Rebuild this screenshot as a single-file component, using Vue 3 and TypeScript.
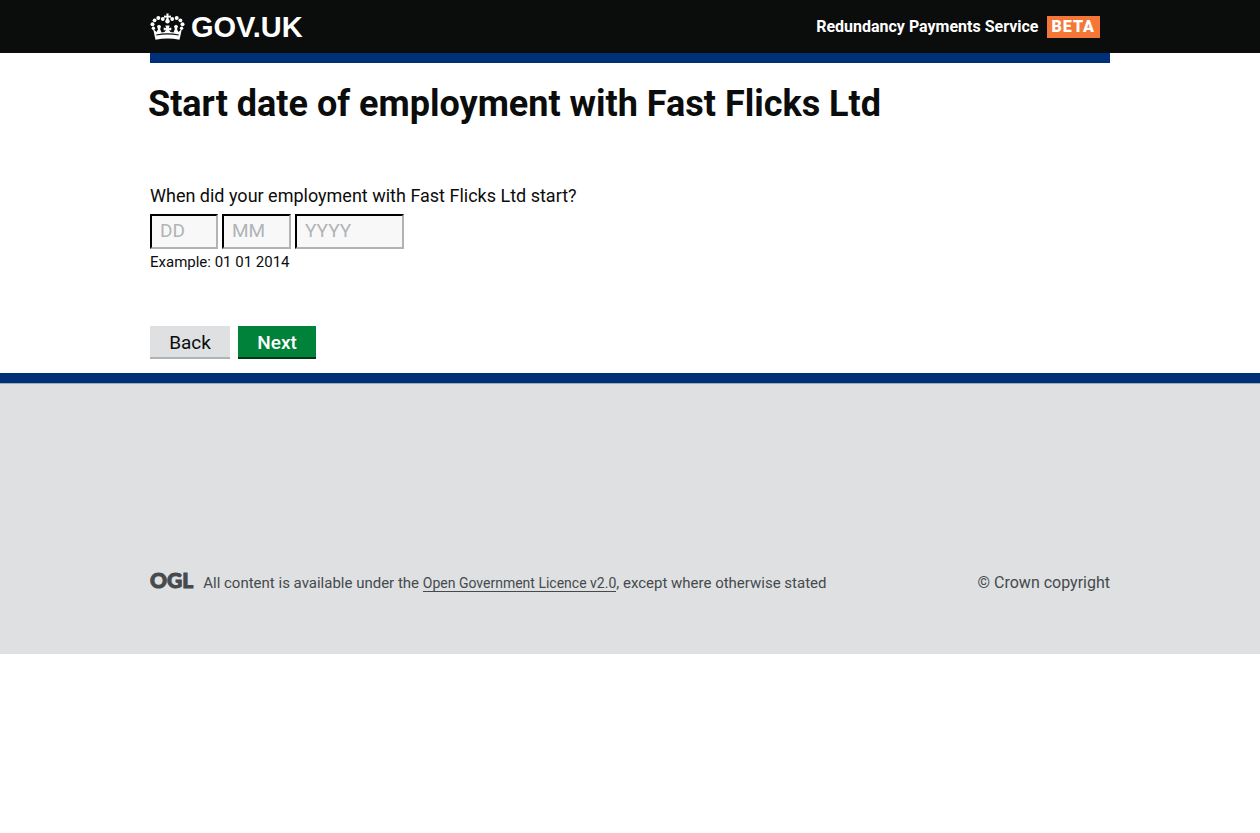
<script setup lang="ts">
import { ref } from 'vue'

interface DatePart {
  id: string
  label: string
  placeholder: string
  maxlength: number
}

const company = 'Fast Flicks Ltd'
const parts: DatePart[] = [
  { id: 'day', label: 'Day', placeholder: 'DD', maxlength: 2 },
  { id: 'month', label: 'Month', placeholder: 'MM', maxlength: 2 },
  { id: 'year', label: 'Year', placeholder: 'YYYY', maxlength: 4 },
]
const values = ref<Record<string, string>>({ day: '', month: '', year: '' })
</script>

<template>
  <div class="page">
    <header class="header">
      <div class="wrap header-row">
        <a class="brand" href="#">
          <svg class="crown" viewBox="0 0 35 28" fill="#fff" aria-hidden="true">
            <path d="M16.3 0.500h2.400l-.3 2.300 2.600-.4v2.400l-2.600-.4.5 3.200h-2.800l.5-3.200-2.600.4V2.400l2.600.4z" />
            <circle cx="17.5" cy="8.200" r="2.200" />
            <circle cx="12.800" cy="6" r="1.900" />
            <circle cx="8.300" cy="5" r="2" />
            <circle cx="4.600" cy="7.300" r="1.900" />
            <circle cx="2.500" cy="11.200" r="2" />
            <circle cx="3.400" cy="15.200" r="1.700" />
            <circle cx="22.200" cy="6" r="1.900" />
            <circle cx="26.700" cy="5" r="2" />
            <circle cx="30.400" cy="7.300" r="1.900" />
            <circle cx="32.500" cy="11.200" r="2" />
            <circle cx="31.600" cy="15.200" r="1.700" />
            <path d="M3 15.500l3.400 3.500 1.600-2.500-1-3.500 2-1.200 2 1.200-.8 3.300 1.300 3.200 3-.5 1.600-2.200-2.400.6v-2.800l2.300.6-.6-2.600h4.200l-.6 2.600 2.300-.6v2.800l-2.400-.6 1.600 2.200 3 .5 1.300-3.200-.8-3.300 2-1.200 2 1.200-1 3.500 1.600 2.500 3.400-3.500-2.500 11.300q-12-2.400-24 0z" />
            <path d="M6.200 22q11.300-2.200 22.600 0" fill="none" stroke="#0b0c0c" stroke-width="1.100" />
          </svg>
          <span>GOV.UK</span>
        </a>
        <div class="service">
          <span>Redundancy Payments Service</span>
          <strong class="beta">BETA</strong>
        </div>
      </div>
    </header>

    <main class="wrap main">
      <h1>Start date of employment with {{ company }}</h1>
      <form @submit.prevent>
        <fieldset aria-describedby="date-example">
          <legend>When did your employment with {{ company }} start?</legend>
          <div class="date">
            <input
              v-for="part in parts"
              :id="part.id"
              :key="part.id"
              v-model="values[part.id]"
              :class="part.id"
              type="text"
              inputmode="numeric"
              :aria-label="part.label"
              :placeholder="part.placeholder"
              :maxlength="part.maxlength"
            />
          </div>
          <p id="date-example" class="example">Example: 01 01 2014</p>
        </fieldset>
        <div class="actions">
          <button type="button" class="back">Back</button>
          <button type="submit" class="next">Next</button>
        </div>
      </form>
    </main>

    <footer class="footer">
      <div class="wrap footer-row">
        <span class="ogl">OGL</span>
        <p class="licence">
          All content is available under the
          <a href="#">Open Government Licence v2.0</a>, except where otherwise stated
        </p>
        <a class="copyright" href="#">© Crown copyright</a>
      </div>
    </footer>
  </div>
</template>

<style>
body {
  margin: 0;
  background: #fff;
}
</style>

<style scoped>
.page {
  font-family: Roboto, "Liberation Sans", sans-serif;
  font-size: 19px;
  color: #0b0c0c;
}
.wrap {
  box-sizing: border-box;
  max-width: 960px;
  margin: 0 auto;
}
.header {
  background: #0b0c0c;
  color: #fff;
}
.header-row {
  display: flex;
  align-items: center;
  justify-content: space-between;
  height: 53px;
  padding-right: 10px;
}
.brand {
  display: flex;
  align-items: center;
  gap: 6px;
  color: #fff;
  font-family: "Liberation Sans", sans-serif;
  font-size: 29px;
  font-weight: 700;
  line-height: 34px;
  text-decoration: none;
}
.crown {
  width: 35px;
  height: 28px;
}
.service {
  display: flex;
  align-items: center;
  gap: 8px;
  font-size: 16px;
  font-weight: 700;
}
.beta {
  padding: 0 5px;
  background: #f47738;
  line-height: 22px;
  letter-spacing: 1px;
}
.main {
  padding-bottom: 14px;
  border-top: 10px solid #003078;
}
h1 {
  margin: 0 0 0 -2px;
  padding: 21px 0 59px;
  font-size: 36px;
  line-height: 40px;
  font-weight: 700;
}
fieldset {
  margin: 0;
  padding: 0;
  border: 0;
}
legend {
  padding: 0;
  font-size: 18px;
  line-height: 25px;
}
.date {
  display: flex;
  gap: 4px;
  padding-top: 6px;
}
.date input {
  box-sizing: border-box;
  width: 68px;
  height: 35px;
  margin: 0;
  padding: 0 8px 2px;
  border: 2px solid;
  border-color: #000 #b1b4b6 #b1b4b6 #000;
  border-radius: 0;
  background: #f8f8f8;
  color: #0b0c0c;
  font: inherit;
}
.date .month {
  width: 69px;
}
.date .year {
  width: 109px;
}
.date input::placeholder {
  color: #b1b4b6;
  opacity: 1;
}
.example {
  margin: 0;
  padding-top: 3px;
  font-size: 15px;
  line-height: 20px;
}
.actions {
  display: flex;
  gap: 8px;
  padding-top: 54px;
}
.actions button {
  height: 33px;
  width: 80px;
  padding: 1px 0 0;
  border: 0;
  border-bottom: 2px solid #b1b4b6;
  background: #dee0e2;
  color: #0b0c0c;
  font: inherit;
}
.actions .next {
  width: 78px;
  border-bottom-color: #003618;
  background: #00823b;
  color: #fff;
  font-weight: 500;
}
.footer {
  padding: 184px 0 59px;
  border-top: 10px solid #003078;
  background: #dee0e2;
  box-shadow: inset 0 1px #a1acb2;
  color: #454a4d;
}
.footer-row {
  display: flex;
  align-items: flex-start;
}
.ogl {
  font-family: Lato, sans-serif;
  font-size: 21px;
  font-weight: 900;
  line-height: 26px;
  -webkit-text-stroke: 1px;
}
.licence {
  flex: 1;
  margin: 0 0 0 10px;
  padding-top: 4px;
  font-size: 15px;
  line-height: 24px;
}
.licence a {
  color: inherit;
  font-size: 14px;
  text-decoration: none;
  border-bottom: 1px solid;
}
.copyright {
  padding-top: 4px;
  color: inherit;
  font-size: 16px;
  line-height: 24px;
  text-decoration: none;
}
</style>
